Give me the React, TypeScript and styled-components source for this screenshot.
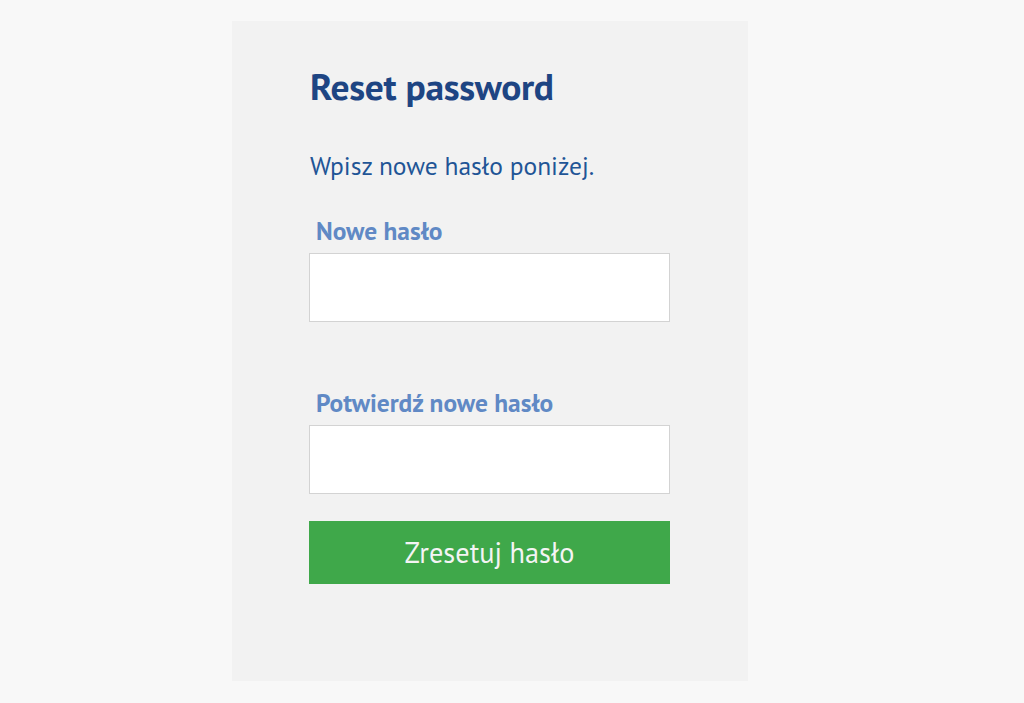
import React from "react";
import styled, { createGlobalStyle } from "styled-components";

const Global = createGlobalStyle`
  html, body { margin: 0; padding: 0; background: #f8f8f8; }
  body { font-family: "PT Sans", Lato, "Noto Sans", sans-serif; }
  * { box-sizing: border-box; }
`;

const Page = styled.div`
  min-height: 703px;
  padding: 21px 0 0 232px;
`;

const Card = styled.div`
  width: 516px;
  height: 660px;
  background: #f2f2f2;
  padding: 41px 78px 0 77px;
  display: flex;
  flex-direction: column;
`;

const Title = styled.h1`
  margin: 0 0 0 1px;
  font-size: 37.5px;
  line-height: 48px;
  font-weight: 700;
  color: #1e4583;
  letter-spacing: -0.3px;
`;

const Intro = styled.p`
  margin: 41px 0 0 1px;
  font-size: 25.5px;
  line-height: 30px;
  color: #1f5596;
`;

const Field = styled.div<{ $gap: number }>`
  display: flex;
  flex-direction: column;
  margin-top: ${(p) => p.$gap}px;
`;

const Label = styled.label`
  font-size: 25.4px;
  line-height: 30px;
  font-weight: 700;
  color: #6089c5;
  margin: 1px 0 7px 7px;
`;

const Input = styled.input`
  width: 361px;
  height: 69px;
  border: 1px solid #d3d3d3;
  background: #fff;
  font-size: 20px;
  padding: 0 12px;
  outline: none;
`;

const Button = styled.button`
  margin-top: 27px;
  width: 361px;
  height: 63px;
  border: none;
  background: #3fa84a;
  color: #f4f4f4;
  font-family: inherit;
  font-size: 28.3px;
  cursor: pointer;
`;

export default function App() {
  return (
    <>
      <Global />
      <Page>
        <Card>
          <Title>Reset password</Title>
          <Intro>Wpisz nowe hasło poniżej.</Intro>
          <Field $gap={34}>
            <Label>Nowe hasło</Label>
            <Input type="password" />
          </Field>
          <Field $gap={65}>
            <Label>Potwierdź nowe hasło</Label>
            <Input type="password" />
          </Field>
          <Button>Zresetuj hasło</Button>
        </Card>
      </Page>
    </>
  );
}
